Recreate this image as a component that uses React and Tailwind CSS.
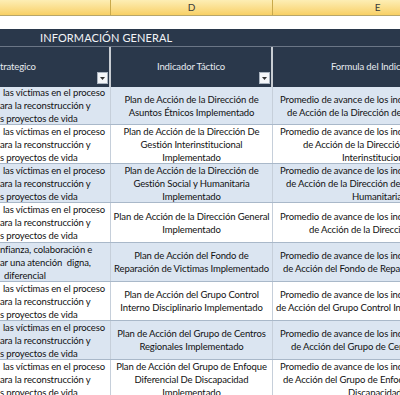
const blue = 'bg-[#dbe5f1]';
const white = 'bg-white';

const rows = [
  {
    bg: blue,
    h: 'h-[38px]',
    c: [['las víctimas en el proceso', 'pl-[3px]'], ['ara la reconstrucción y', 'pl-0'], ['s proyectos de vida', 'pl-0']],
    d: ['Plan de Acción de la Dirección de', 'Asuntos Étnicos Implementado'],
    e: [['Promedio de avance de los indicadores del Plan', 'pl-[7px]'], ['de Acción de la Dirección de Asuntos', 'pl-[14px]']],
  },
  {
    bg: white,
    h: 'h-[39px]',
    c: [['las víctimas en el proceso', 'pl-[3px]'], ['ara la reconstrucción y', 'pl-0'], ['s proyectos de vida', 'pl-0']],
    d: ['Plan de Acción de la Dirección De', 'Gestión Interinstitucional', 'Implementado'],
    e: [['Promedio de avance de los indicadores del Plan', 'pl-[7px]'], ['de Acción de la Dirección De Gestión', 'pl-[30px]'], ['Interinstitucional', 'pl-[69px]']],
  },
  {
    bg: blue,
    h: 'h-[39px]',
    c: [['las víctimas en el proceso', 'pl-[3px]'], ['ara la reconstrucción y', 'pl-0'], ['s proyectos de vida', 'pl-0']],
    d: ['Plan de Acción de la Dirección de', 'Gestión Social y Humanitaria', 'Implementado'],
    e: [['Promedio de avance de los indicadores del Plan', 'pl-[7px]'], ['de Acción de la Dirección de Gestión Social', 'pl-[13px]'], ['Humanitaria', 'pl-[79px]']],
  },
  {
    bg: white,
    h: 'h-[40px]',
    c: [['las víctimas en el proceso', 'pl-[3px]'], ['ara la reconstrucción y', 'pl-0'], ['s proyectos de vida', 'pl-0']],
    d: ['Plan de Acción de la Dirección General', 'Implementado'],
    e: [['Promedio de avance de los indicadores del Plan', 'pl-[7px]'], ['de Acción de la Dirección General', 'pl-[36px]']],
  },
  {
    bg: blue,
    h: 'h-[39px]',
    c: [['nfianza, colaboración e', 'pl-0'], ['ar una atención  digna,', 'pl-0'], ['diferencial', 'pl-[4px]']],
    d: ['Plan de Acción del Fondo de', 'Reparación de Victimas Implementado'],
    e: [['Promedio de avance de los indicadores del Plan', 'pl-[7px]'], ['de Acción del Fondo de Reparación', 'pl-[10px]']],
  },
  {
    bg: white,
    h: 'h-[39px]',
    c: [['las víctimas en el proceso', 'pl-[3px]'], ['ara la reconstrucción y', 'pl-0'], ['s proyectos de vida', 'pl-0']],
    d: ['Plan de Acción del Grupo Control', 'Interno Disciplinario Implementado'],
    e: [['Promedio de avance de los indicadores del Plan', 'pl-[7px]'], ['de Acción del Grupo Control Interno', 'pl-[3px]']],
  },
  {
    bg: blue,
    h: 'h-[39px]',
    c: [['las víctimas en el proceso', 'pl-[3px]'], ['ara la reconstrucción y', 'pl-0'], ['s proyectos de vida', 'pl-0']],
    d: ['Plan de Acción del Grupo de Centros', 'Regionales Implementado'],
    e: [['Promedio de avance de los indicadores del Plan', 'pl-[7px]'], ['de Acción del Grupo de Centros', 'pl-[18px]']],
  },
  {
    bg: white,
    h: 'h-[39px]',
    c: [['las víctimas en el proceso', 'pl-[3px]'], ['ara la reconstrucción y', 'pl-0'], ['s proyectos de vida', 'pl-0']],
    d: ['Plan de Acción del Grupo de Enfoque', 'Diferencial De Discapacidad', 'Implementado'],
    e: [['Promedio de avance de los indicadores del Plan', 'pl-[7px]'], ['de Acción del Grupo de Enfoque Diferencial', 'pl-[10px]'], ['Discapacidad', 'pl-[75px]']],
  },
];

function FilterButton() {
  return (
    <div className="absolute right-[1px] bottom-[3px] w-[11px] h-[12px] bg-[#f4f6f9] border border-[#aab4c0] flex items-center justify-center">
      <svg width="5" height="3" viewBox="0 0 5 3">
        <path d="M0 0h5L2.5 3z" fill="#333" />
      </svg>
    </div>
  );
}

export default function App() {
  return (
    <div className="w-[400px] h-[395px] overflow-hidden bg-white text-[9.5px] leading-[13px] tracking-[-0.12px] text-black" style={{ fontFamily: 'Lato, "Open Sans", sans-serif' }}>
      <div className="w-[700px]">
        {/* column letters */}
        <div className="flex h-[16px] border-b border-[#b7a66a] bg-gradient-to-b from-[#fdeeb4] to-[#f8d064] text-[10px] text-[#3a3a3a]">
          <div className="w-[111px] border-r border-[#c9a94b]" />
          <div className="w-[162px] border-r border-[#c9a94b] flex items-center justify-center">D</div>
          <div className="w-[210px] border-r border-[#c9a94b] flex items-center justify-center">E</div>
        </div>
        <div className="h-[13px] bg-white" />

        {/* title */}
        <div className="h-[17px] bg-[#2a384b] text-[#f2f4f7] text-[11px] leading-[17px] pl-[40px] tracking-[0.1px]">
          INFORMACIÓN GENERAL
        </div>

        {/* headers */}
        <div className="flex h-[41px] bg-[#2a384b] border-t border-[#6b7686] text-[#e6eaef]">
          <div className="relative w-[111px] border-r-2 border-[#c8cdd3] flex items-center">
            <span className="-mt-[2px]">trategico</span>
            <FilterButton />
          </div>
          <div className="relative w-[162px] border-r-2 border-[#c8cdd3] flex items-center justify-center">
            <span className="-mt-[2px]">Indicador Táctico</span>
            <FilterButton />
          </div>
          <div className="flex-1 flex items-center pl-[58px]">
            <span className="-mt-[2px] whitespace-nowrap">Formula del Indicador</span>
          </div>
        </div>

        {/* data */}
        {rows.map((r, i) => (
          <div key={i} className={`flex ${r.h} ${r.bg} border-b border-[#a9b8c9] text-[#111]`}>
            <div className="w-[111px] border-r border-[#c6cfda] flex flex-col justify-center overflow-hidden">
              {r.c.map(([t, p], j) => (
                <div key={j} className={`whitespace-pre ${p}`}>{t}</div>
              ))}
            </div>
            <div className="w-[162px] border-r border-[#c6cfda] flex flex-col justify-center items-center text-center overflow-hidden">
              {r.d.map((t, j) => (
                <div key={j} className="whitespace-nowrap">{t}</div>
              ))}
            </div>
            <div className="flex-1 flex flex-col justify-center overflow-hidden">
              {r.e.map(([t, p], j) => (
                <div key={j} className={`whitespace-nowrap ${p}`}>{t}</div>
              ))}
            </div>
          </div>
        ))}
      </div>
    </div>
  );
}
